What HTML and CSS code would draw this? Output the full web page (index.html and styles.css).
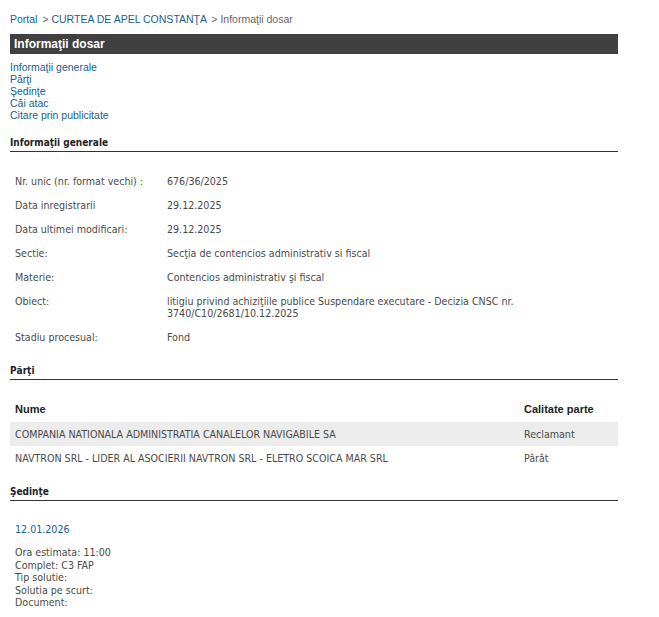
FILE: index.html
```html
<!DOCTYPE html>
<html>
<head>
<meta charset="utf-8">
<link rel="stylesheet" href="styles.css">
</head>
<body>
<div class="page">
  <div class="crumbs"><a href="#">Portal</a> <span class="sep">&gt;</span> <a href="#">CURTEA DE APEL CONSTANŢA</a> <span class="sep">&gt; Informaţii dosar</span></div>
  <div class="titlebar">Informaţii dosar</div>
  <div class="toc">
    <a href="#">Informaţii generale</a>
    <a href="#">Părţi</a>
    <a href="#">Şedinţe</a>
    <a href="#">Căi atac</a>
    <a href="#">Citare prin publicitate</a>
  </div>

  <div class="section-head">Informaţii generale</div>
  <div class="info">
    <div class="row"><div class="lbl">Nr. unic (nr. format vechi) :</div><div class="val">676/36/2025</div></div>
    <div class="row"><div class="lbl">Data inregistrarii</div><div class="val">29.12.2025</div></div>
    <div class="row"><div class="lbl">Data ultimei modificari:</div><div class="val">29.12.2025</div></div>
    <div class="row"><div class="lbl">Sectie:</div><div class="val">Secţia de contencios administrativ si fiscal</div></div>
    <div class="row"><div class="lbl">Materie:</div><div class="val">Contencios administrativ şi fiscal</div></div>
    <div class="row"><div class="lbl">Obiect:</div><div class="val">litigiu privind achiziţiile publice Suspendare executare - Decizia CNSC nr.<br>3740/C10/2681/10.12.2025</div></div>
    <div class="row"><div class="lbl">Stadiu procesual:</div><div class="val">Fond</div></div>
  </div>

  <div class="section-head">Părţi</div>
  <div class="parti">
    <div class="thead"><div class="c1">Nume</div><div class="c2">Calitate parte</div></div>
    <div class="tr alt"><div class="c1">COMPANIA NATIONALA ADMINISTRATIA CANALELOR NAVIGABILE SA</div><div class="c2">Reclamant</div></div>
    <div class="tr"><div class="c1">NAVTRON SRL - LIDER AL ASOCIERII NAVTRON SRL - ELETRO SCOICA MAR SRL</div><div class="c2">Pârât</div></div>
  </div>

  <div class="section-head">Şedinţe</div>
  <div class="sedinte">
    <div class="date">12.01.2026</div>
    <div class="details">
      <div>Ora estimata: 11:00</div>
      <div>Complet: C3 FAP</div>
      <div>Tip solutie:</div>
      <div>Solutia pe scurt:</div>
      <div>Document:</div>
    </div>
  </div>
</div>
</body>
</html>
```
FILE: styles.css
```css
html, body { margin: 0; padding: 0; background: #fff; }
body { font-family: "Liberation Sans", Arial, sans-serif; }
.page { width: 608px; padding: 12px 0 0 10px; }
a { color: #1a5d99; text-decoration: none; }
.crumbs { font-size: 10.5px; line-height: 14px; color: #555; }
.crumbs .sep { color: #666; margin-left: 2px; }
.titlebar {
  margin-top: 8px;
  height: 20px;
  line-height: 20px;
  background: #404040;
  color: #fff;
  font-weight: bold;
  font-size: 12px;
  padding-left: 4px;
}
.toc { margin-top: 7px; display: flex; flex-direction: column; font-size: 10.5px; line-height: 12px; }
.section-head {
  font-family: "DejaVu Sans Condensed", "DejaVu Sans", sans-serif;
  font-weight: bold;
  font-size: 10px;
  color: #222;
  border-bottom: 1px solid #333;
  padding-bottom: 1px;
  line-height: 14px;
}
.toc + .section-head { margin-top: 15px; }
.info {
  font-family: "DejaVu Sans Condensed", "DejaVu Sans", sans-serif;
  font-size: 10.6px;
  color: #4a4a4a;
  padding: 23px 0 9px 5px;
}
.row { display: flex; line-height: 12px; padding-bottom: 12px; }
.row .lbl { width: 152px; flex: none; }
.row .val { flex: 1; }
.parti {
  font-family: "DejaVu Sans Condensed", "DejaVu Sans", sans-serif;
  font-size: 10.6px;
  color: #4a4a4a;
  padding: 16px 0 15px 0;
}
.thead, .tr { display: flex; align-items: center; }
.thead { font-family: "Liberation Sans", Arial, sans-serif; font-weight: bold; font-size: 11px; color: #222; height: 26px; }
.tr { height: 24px; }
.tr.alt { background: #ececec; }
.c1 { flex: 1; padding-left: 5px; }
.c2 { width: 94px; flex: none; }
.sedinte {
  font-family: "DejaVu Sans Condensed", "DejaVu Sans", sans-serif;
  font-size: 10.6px;
  color: #4a4a4a;
  padding: 21px 0 0 5px;
}
.date { color: #1a5d99; line-height: 14px; }
.details { margin-top: 10px; line-height: 12.5px; }
```
